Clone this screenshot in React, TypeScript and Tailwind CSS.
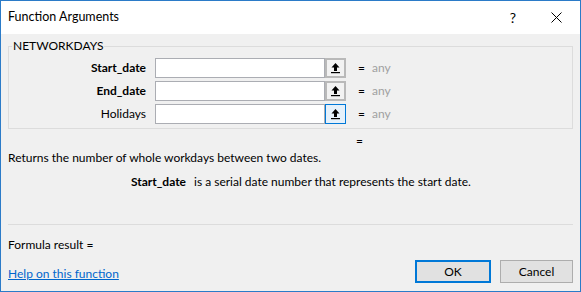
import React from "react";

const font = { fontFamily: 'Lato, "Liberation Sans", Arial, sans-serif' };

const RefIcon = () => (
  <svg width="11" height="12" viewBox="0 0 11 12">
    <path d="M5.5 1 L9.5 5.5 L7 5.5 L7 9 L4 9 L4 5.5 L1.5 5.5 Z" fill="#000" />
    <rect x="1" y="10" width="9" height="1.2" fill="#000" />
  </svg>
);

const ArgRow = ({ label, bold, active }: { label: string; bold?: boolean; active?: boolean }) => (
  <div className="flex items-center h-[20px]">
    <div className={`w-[137px] text-right text-[12px] text-black ${bold ? "font-bold" : ""}`}>{label}</div>
    <div className="ml-[9px] flex h-[20px]">
      <div className="w-[170px] h-[20px] bg-white border border-[#abadb3]" />
      <div
        className={
          active
            ? "w-[21px] h-[20px] flex items-center justify-center border border-[#0078d7] bg-[#e5f1fb]"
            : "w-[21px] h-[20px] flex items-center justify-center border-2 border-[#b9b9b9] bg-[#f2f2f2]"
        }
      >
        <RefIcon />
      </div>
    </div>
    <span className="ml-[12px] text-[12px] text-black">=</span>
    <span className="ml-[7px] text-[12px] text-[#a0a0a0]">any</span>
  </div>
);

export default function App() {
  return (
    <div className="w-[581px] h-[292px] border border-[#2b7bc8] flex flex-col overflow-hidden" style={font}>
      <div className="h-[33px] bg-white flex items-center pl-[7px] pr-[18px] shrink-0">
        <span className="text-[12.5px] text-black">Function Arguments</span>
        <div className="ml-auto flex items-center gap-[35px]">
          <span className="text-[14px] text-black">?</span>
          <svg width="11" height="11" viewBox="0 0 11 11">
            <path d="M0.5 0.5 L10.5 10.5 M10.5 0.5 L0.5 10.5" stroke="#000" strokeWidth="1" />
          </svg>
        </div>
      </div>

      <div className="flex-1 bg-[#f0f0f0] px-[7px] flex flex-col text-[12px] text-black">
        <fieldset className="mt-[5px] border border-[#dcdcdc] pl-0 pr-0 pt-[5px] pb-[3px] h-[90px]">
          <legend className="ml-[3px] px-[1px] text-[12px] leading-[14px]">NETWORKDAYS</legend>
          <div className="flex flex-col gap-[3px]">
            <ArgRow label="Start_date" bold />
            <ArgRow label="End_date" bold />
            <ArgRow label="Holidays" active />
          </div>
        </fieldset>

        <div className="pl-[348px] h-[14px] leading-[14px] mt-[5px]">=</div>
        <div className="mt-[3px] leading-[14px]">Returns the number of whole workdays between two dates.</div>
        <div className="mt-[10px] leading-[14px] flex">
          <span className="w-[178px] text-right font-bold">Start_date</span>
          <span className="ml-[8px]">is a serial date number that represents the start date.</span>
        </div>

        <div className="mt-[35px] border-t border-[#dcdcdc]" />
        <div className="mt-[13px] leading-[14px]">Formula result =</div>

        <div className="mt-[8px] flex items-center">
          <span className="text-[#0066cc] underline leading-[14px] mt-[5px]">Help on this function</span>
          <div className="ml-auto flex gap-[9px]">
            <button className="w-[76px] h-[23px] border-2 border-[#0078d7] bg-[#e1e1e1] text-[12px]">OK</button>
            <button className="w-[73px] h-[23px] border border-[#adadad] bg-[#e1e1e1] text-[12px]">Cancel</button>
          </div>
        </div>
      </div>
    </div>
  );
}
